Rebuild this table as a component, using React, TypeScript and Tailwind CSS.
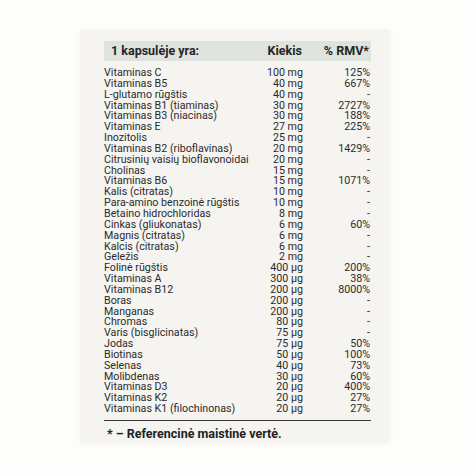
const rows: [string, string, string][] = [
  ["Vitaminas C", "100 mg", "125%"],
  ["Vitaminas B5", "40 mg", "667%"],
  ["L-glutamo rūgštis", "40 mg", "-"],
  ["Vitaminas B1 (tiaminas)", "30 mg", "2727%"],
  ["Vitaminas B3 (niacinas)", "30 mg", "188%"],
  ["Vitaminas E", "27 mg", "225%"],
  ["Inozitolis", "25 mg", "-"],
  ["Vitaminas B2 (riboflavinas)", "20 mg", "1429%"],
  ["Citrusinių vaisių bioflavonoidai", "20 mg", "-"],
  ["Cholinas", "15 mg", "-"],
  ["Vitaminas B6", "15 mg", "1071%"],
  ["Kalis (citratas)", "10 mg", "-"],
  ["Para-amino benzoinė rūgštis", "10 mg", "-"],
  ["Betaino hidrochloridas", "8 mg", "-"],
  ["Cinkas (gliukonatas)", "6 mg", "60%"],
  ["Magnis (citratas)", "6 mg", "-"],
  ["Kalcis (citratas)", "6 mg", "-"],
  ["Geležis", "2 mg", "-"],
  ["Folinė rūgštis", "400 µg", "200%"],
  ["Vitaminas A", "300 µg", "38%"],
  ["Vitaminas B12", "200 µg", "8000%"],
  ["Boras", "200 µg", "-"],
  ["Manganas", "200 µg", "-"],
  ["Chromas", "80 µg", "-"],
  ["Varis (bisglicinatas)", "75 µg", "-"],
  ["Jodas", "75 µg", "50%"],
  ["Biotinas", "50 µg", "100%"],
  ["Selenas", "40 µg", "73%"],
  ["Molibdenas", "30 µg", "60%"],
  ["Vitaminas D3", "20 µg", "400%"],
  ["Vitaminas K2", "20 µg", "27%"],
  ["Vitaminas K1 (filochinonas)", "20 µg", "27%"],
];

export default function App() {
  return (
    <div
      className="w-[474px] h-[474px] bg-[#fdfdfc] pt-[30px] pl-[80px]"
      style={{ fontFamily: "Roboto, 'Noto Sans', sans-serif" }}
    >
      <div className="w-[310px] h-[413px] bg-[#f5f4f0] rounded-[2px] shadow-[0_0_6px_rgba(0,0,0,0.04)] pt-[11px] pl-[24px] pr-[19px] text-[#2b2b2b]">
        <div className="h-[20px] bg-[#dfe3dd] flex items-center pl-[7px] pr-[2px] text-[12.5px] font-bold text-[#262626]">
          <span className="flex-1">1 kapsulėje yra:</span>
          <span className="w-[60px] text-right">Kiekis</span>
          <span className="w-[67px] text-right">% RMV*</span>
        </div>
        <div className="mt-[7px] text-[10.7px] leading-[10.85px]">
          {rows.map(([name, amount, rmv]) => (
            <div key={name} className="flex h-[10.85px]">
              <span className="flex-1 min-w-0 whitespace-nowrap">{name}</span>
              <span className="w-[60px] shrink-0 text-right pr-[1px]">{amount}</span>
              <span className="w-[67px] shrink-0 text-right pr-[1px]">{rmv}</span>
            </div>
          ))}
        </div>
        <div className="mt-[5px] h-[1px] bg-[#3a3a3a]" />
        <div className="mt-[6px] pl-[3px] text-[12.5px] font-bold leading-[14px] text-[#222]">
          * – Referencinė maistinė vertė.
        </div>
      </div>
    </div>
  );
}
